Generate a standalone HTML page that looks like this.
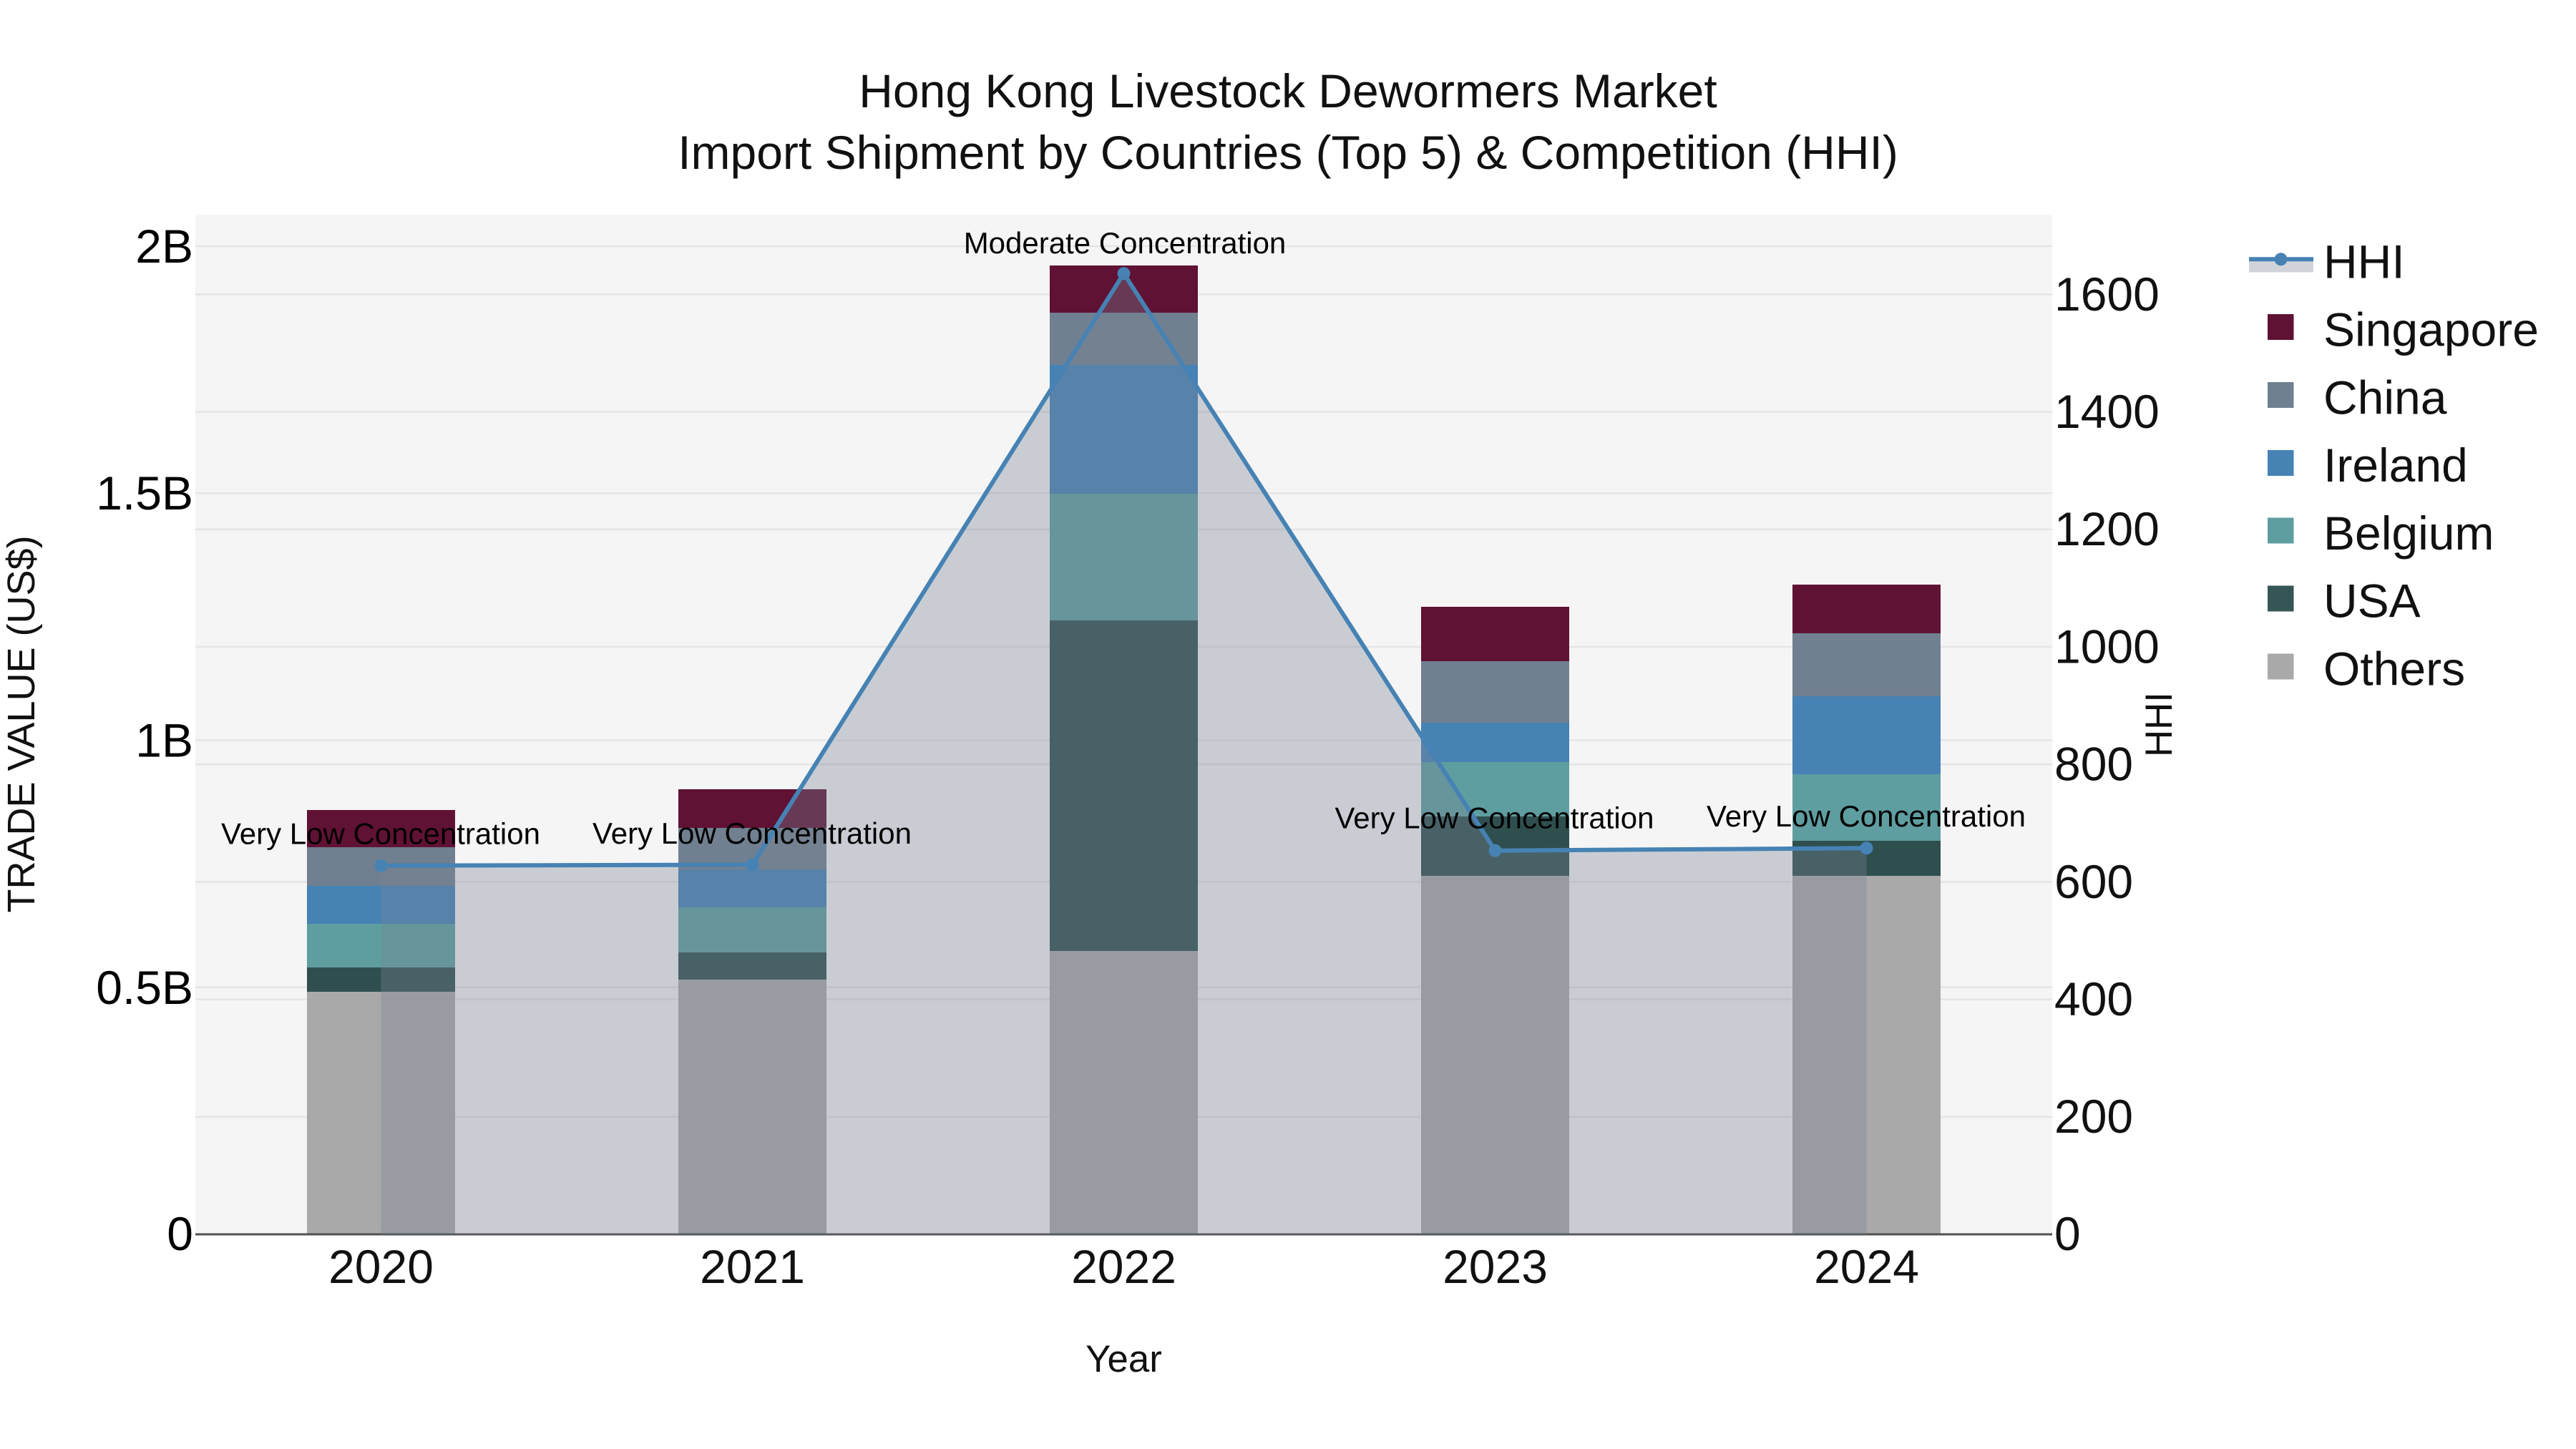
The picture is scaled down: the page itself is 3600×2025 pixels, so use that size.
<!DOCTYPE html>
<html lang="en">
<head>
<meta charset="utf-8">
<title>Hong Kong Livestock Dewormers Market</title>
<style>
html,body{margin:0;padding:0;background:#fff;width:3600px;height:2025px;overflow:hidden}
svg{display:block}
text{font-family:"Liberation Sans",Arial,sans-serif;fill:#111}
.t{font-size:66px}
.at{font-size:52.8px}
.an{font-size:42px;fill:#000;text-anchor:middle}
.m{text-anchor:middle}
.l{fill:#000;text-anchor:end}
</style>
</head>
<body>
<svg width="3600" height="2025" viewBox="0 0 3600 2025" xmlns="http://www.w3.org/2000/svg">
<rect width="3600" height="2025" fill="#fff"/>
<rect x="273" y="300" width="2595" height="1425" fill="#f5f5f5"/>

<g stroke="#e5e5e5" stroke-width="2.6">
<path d="M273 344H2868M273 689.25H2868M273 1034.5H2868M273 1379.75H2868"/>
<path d="M273 411.4H2868M273 575.6H2868M273 739.8H2868M273 904H2868M273 1068.2H2868M273 1232.4H2868M273 1396.6H2868M273 1560.8H2868"/>
</g>

<g shape-rendering="crispEdges">
<!-- 2020 -->
<rect x="429" y="1386" width="207" height="339" fill="#a9a9a9"/>
<rect x="429" y="1352" width="207" height="34" fill="#2f4f4f"/>
<rect x="429" y="1291" width="207" height="61" fill="#5f9ea0"/>
<rect x="429" y="1238" width="207" height="53" fill="#4682b4"/>
<rect x="429" y="1184" width="207" height="54" fill="#708090"/>
<rect x="429" y="1132" width="207" height="52" fill="#601234"/>
<!-- 2021 -->
<rect x="948" y="1369" width="207" height="356" fill="#a9a9a9"/>
<rect x="948" y="1331" width="207" height="38" fill="#2f4f4f"/>
<rect x="948" y="1268" width="207" height="63" fill="#5f9ea0"/>
<rect x="948" y="1215" width="207" height="53" fill="#4682b4"/>
<rect x="948" y="1157" width="207" height="58" fill="#708090"/>
<rect x="948" y="1103" width="207" height="54" fill="#601234"/>
<!-- 2022 -->
<rect x="1467" y="1329" width="207" height="396" fill="#a9a9a9"/>
<rect x="1467" y="867" width="207" height="462" fill="#2f4f4f"/>
<rect x="1467" y="690" width="207" height="177" fill="#5f9ea0"/>
<rect x="1467" y="510" width="207" height="180" fill="#4682b4"/>
<rect x="1467" y="437" width="207" height="73" fill="#708090"/>
<rect x="1467" y="371" width="207" height="66" fill="#601234"/>
<!-- 2023 -->
<rect x="1986" y="1224" width="207" height="501" fill="#a9a9a9"/>
<rect x="1986" y="1141" width="207" height="83" fill="#2f4f4f"/>
<rect x="1986" y="1065" width="207" height="76" fill="#5f9ea0"/>
<rect x="1986" y="1010" width="207" height="55" fill="#4682b4"/>
<rect x="1986" y="924" width="207" height="86" fill="#708090"/>
<rect x="1986" y="848" width="207" height="76" fill="#601234"/>
<!-- 2024 -->
<rect x="2505" y="1224" width="207" height="501" fill="#a9a9a9"/>
<rect x="2505" y="1175" width="207" height="49" fill="#2f4f4f"/>
<rect x="2505" y="1082" width="207" height="93" fill="#5f9ea0"/>
<rect x="2505" y="973" width="207" height="109" fill="#4682b4"/>
<rect x="2505" y="885" width="207" height="88" fill="#708090"/>
<rect x="2505" y="817" width="207" height="68" fill="#601234"/>
</g>

<rect x="273" y="1723.5" width="2595" height="3" fill="#505050"/>

<polygon points="532.5,1209.8 1051.5,1208.5 1570.5,382.2 2089.5,1188.7 2608.5,1185.3 2608.5,1725 532.5,1725" fill="rgb(120,132,150)" fill-opacity=".35"/>
<polyline points="532.5,1209.8 1051.5,1208.5 1570.5,382.2 2089.5,1188.7 2608.5,1185.3" fill="none" stroke="#4682b4" stroke-width="6" stroke-linejoin="round"/>
<g fill="#4682b4">
<circle cx="532.5" cy="1209.8" r="9"/>
<circle cx="1051.5" cy="1208.5" r="9"/>
<circle cx="1570.5" cy="382.2" r="9"/>
<circle cx="2089.5" cy="1188.7" r="9"/>
<circle cx="2608.5" cy="1185.3" r="9"/>
</g>

<text class="an" x="532" y="1179.3">Very Low Concentration</text>
<text class="an" x="1051" y="1179">Very Low Concentration</text>
<text class="an" x="1572" y="354">Moderate Concentration</text>
<text class="an" x="2088.5" y="1157.5">Very Low Concentration</text>
<text class="an" x="2608" y="1155">Very Low Concentration</text>

<text class="t m" x="1800" y="150">Hong Kong Livestock Dewormers Market</text>
<text class="t m" x="1800" y="236">Import Shipment by Countries (Top 5) &amp; Competition (HHI)</text>

<text class="t l" x="270" y="367">2B</text>
<text class="t l" x="270" y="712">1.5B</text>
<text class="t l" x="270" y="1057.5">1B</text>
<text class="t l" x="270" y="1403">0.5B</text>
<text class="t l" x="270" y="1747">0</text>

<text class="t" x="2871" y="434">1600</text>
<text class="t" x="2871" y="598">1400</text>
<text class="t" x="2871" y="762">1200</text>
<text class="t" x="2871" y="926.5">1000</text>
<text class="t" x="2871" y="1090.5">800</text>
<text class="t" x="2871" y="1255">600</text>
<text class="t" x="2871" y="1419">400</text>
<text class="t" x="2871" y="1583">200</text>
<text class="t" x="2871" y="1747">0</text>

<text class="t m" x="532.5" y="1793">2020</text>
<text class="t m" x="1051.5" y="1793">2021</text>
<text class="t m" x="1570.5" y="1793">2022</text>
<text class="t m" x="2089.5" y="1793">2023</text>
<text class="t m" x="2608.5" y="1793">2024</text>

<text class="at m" x="1570.5" y="1917">Year</text>
<text class="m" style="font-size:54px" transform="translate(48 1012) rotate(-90)">TRADE VALUE (US$)</text>
<text class="at m" transform="translate(3035 1012.5) rotate(-90)">HHI</text>

<rect x="3143" y="362" width="90" height="18.5" fill="rgb(120,132,150)" fill-opacity=".35"/>
<path d="M3143 362.3H3233" stroke="#4682b4" stroke-width="6" fill="none"/>
<circle cx="3187.5" cy="362.3" r="9" fill="#4682b4"/>
<g shape-rendering="crispEdges">
<rect x="3169" y="439" width="36.5" height="36" fill="#601234"/>
<rect x="3169" y="534" width="36.5" height="36" fill="#708090"/>
<rect x="3169" y="629" width="36.5" height="36" fill="#4682b4"/>
<rect x="3169" y="723.5" width="36.5" height="36" fill="#5f9ea0"/>
<rect x="3169" y="818.5" width="36.5" height="36" fill="#2f4f4f" fill-opacity=".97"/>
<rect x="3169" y="913.5" width="36.5" height="36" fill="#a9a9a9"/>
</g>
<text class="t" x="3247" y="388.5">HHI</text>
<text class="t" x="3247" y="483.5">Singapore</text>
<text class="t" x="3247" y="578.3">China</text>
<text class="t" x="3247" y="673.2">Ireland</text>
<text class="t" x="3247" y="768">Belgium</text>
<text class="t" x="3247" y="862.5">USA</text>
<text class="t" x="3247" y="957.5">Others</text>
</svg>
</body>
</html>
